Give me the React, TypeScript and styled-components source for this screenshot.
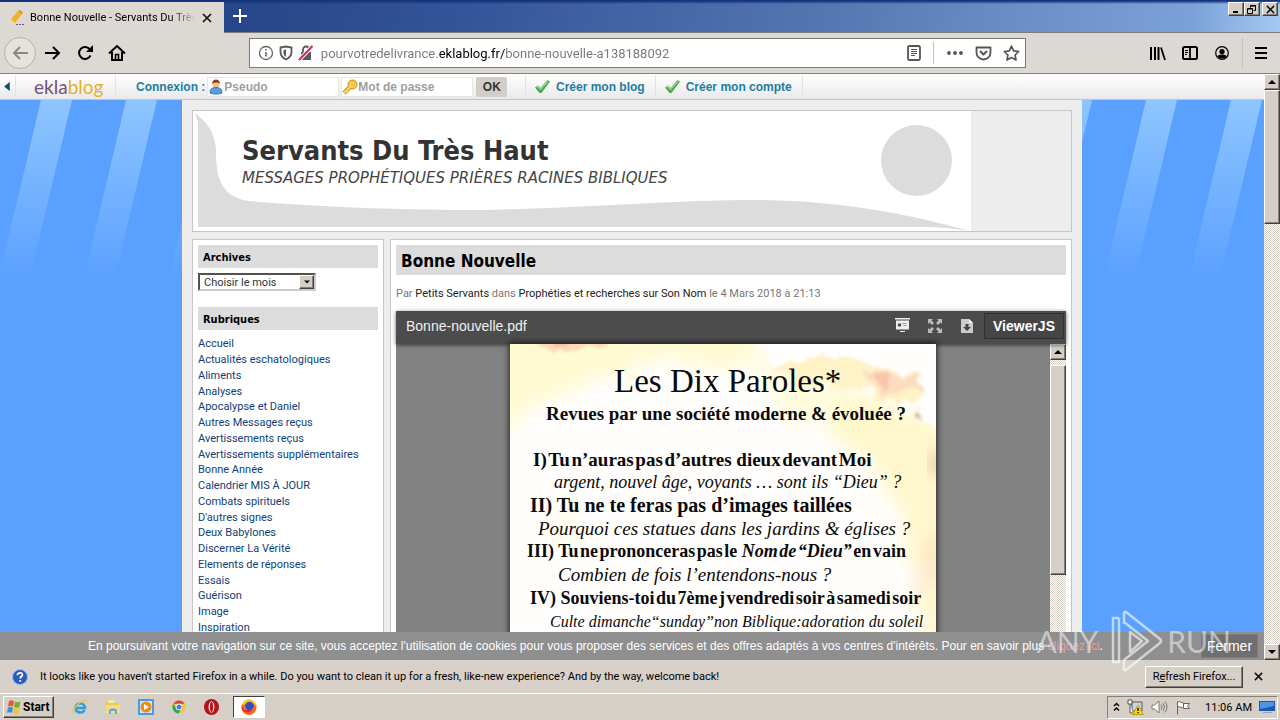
import React from "react";
import styled, { createGlobalStyle, css } from "styled-components";

const uiFont = `Roboto, "Noto Sans", sans-serif`;
const webFont = `"Liberation Sans", Arial, sans-serif`;
const tahoma = `"DejaVu Sans Condensed", "Noto Sans", sans-serif`;
const verdana = `"DejaVu Sans", Verdana, sans-serif`;
const docFont = `"Liberation Serif", "Times New Roman", serif`;

const GlobalStyle = createGlobalStyle`
  *, *::before, *::after { box-sizing: border-box; }
  body { margin: 0; background: #d6cfc8; font-family: ${uiFont}; font-size: 11px; color: #000; }
  button, input, select { font: inherit; margin: 0; padding: 0; border: 0; background: none; color: inherit; }
  a { color: inherit; text-decoration: none; }
  h1, h2, h3, p, ul { margin: 0; padding: 0; }
  ul { list-style: none; }
  svg { display: block; flex: none; }
`;

const raised = css`
  background: #d6cfc8;
  border: 1px solid;
  border-color: #fff #404040 #404040 #fff;
  box-shadow: inset -1px -1px 0 #868078;
`;

const Desktop = styled.div`
  display: flex;
  flex-direction: column;
  height: 100vh;
  min-height: 480px;
  position: relative;
  overflow: hidden;
`;

/* ---------- window title bar ---------- */

const TitleBar = styled.header`
  display: flex;
  align-items: flex-start;
  height: 33px;
  flex: none;
  background:
    linear-gradient(180deg, #15337c 0 1px, rgba(21, 51, 124, 0) 4px),
    linear-gradient(97deg, #1d3c83 0%, #2b4a8c 24%, #34549a 36%, #5173ae 62%, #6b8fc6 80%, #7ba2d8 93%, #a3caf2 100%);
  border-bottom: 1px solid #7d7d80;
`;

const Tab = styled.div`
  display: flex;
  align-items: center;
  width: 224px;
  height: 31px;
  margin-top: 2px;
  padding: 0 9px 0 8px;
  background: #dcd8d3;
`;

const TabTitle = styled.span`
  flex: 1;
  margin-left: 6px;
  overflow: hidden;
  white-space: nowrap;
  mask-image: linear-gradient(90deg, #000 140px, transparent 166px);
`;

const IconButton = styled.button<{ $size?: number; $round?: boolean }>`
  display: flex;
  align-items: center;
  justify-content: center;
  flex: none;
  width: ${(p) => p.$size ?? 32}px;
  height: ${(p) => p.$size ?? 32}px;
  ${(p) =>
    p.$round &&
    css`
      margin-right: 1px;
      border: 1px solid #b5b1ac;
      border-radius: 50%;
      background: #e6e3df;
    `}
`;

const WindowButtons = styled.div`
  display: flex;
  margin: 2px 2px 0 auto;
`;

const WindowButton = styled.button<{ $gap?: boolean }>`
  ${raised}
  display: flex;
  align-items: center;
  justify-content: center;
  width: 16px;
  height: 14px;
  margin-left: ${(p) => (p.$gap ? 2 : 0)}px;
`;

/* ---------- navigation bar ---------- */

const NavBar = styled.nav`
  display: flex;
  align-items: center;
  height: 41px;
  flex: none;
  padding: 0 3px 0 4px;
  background: #dcd8d3;
  border-bottom: 1px solid #83807b;
`;

const FlexSpace = styled.div`
  flex: 117 1 0;
`;

const UrlBox = styled.div`
  display: flex;
  align-items: center;
  flex: 773 1 0;
  height: 30px;
  padding: 0 2px 0 8px;
  gap: 4px;
  background: #fff;
  border: 1px solid #7b7974;
`;

const UrlInput = styled.input`
  flex: 1;
  min-width: 0;
  margin-left: 3px;
  font-size: 13px;
  color: transparent;
  background: linear-gradient(90deg, #777 0 118px, #000 118px 184px, #777 184px);
  background-clip: text;
  -webkit-background-clip: text;
`;

const Rule = styled.span<{ $h?: number; $color?: string; $space?: string }>`
  width: 1px;
  height: ${(p) => p.$h ?? 22}px;
  flex: none;
  margin: ${(p) => p.$space ?? "0"};
  background: ${(p) => p.$color ?? "#c5c2bd"};
`;

/* ---------- page ---------- */

const Viewport = styled.div`
  display: flex;
  flex: 1;
  min-height: 0;
`;

const Page = styled.div`
  position: relative;
  display: flex;
  flex-direction: column;
  flex: 1;
  min-width: 0;
  overflow: hidden;
  background: #59a0ff;
`;

const EklaBar = styled.div`
  display: flex;
  align-items: center;
  height: 26px;
  flex: none;
  background: linear-gradient(#fff, #e9e9e9);
  border-bottom: 1px solid #c4c4c4;
  font: bold 12px ${webFont};
  color: #1f7da3;
`;

const Logo = styled.a`
  width: 99px;
  padding-left: 18px;
  font: 19px/24px Lato, sans-serif;
  color: #75507b;
  b { font-weight: 400; color: #e3b12c; }
`;

const Login = styled.form`
  display: flex;
  align-items: center;
  padding-left: 20px;
  width: 409px;
`;

const Field = styled.label<{ $w: number }>`
  display: flex;
  align-items: center;
  width: ${(p) => p.$w}px;
  height: 20px;
  margin-left: 2px;
  background: #fff;
  border: 1px solid #e6e6e6;
  input { flex: 1; min-width: 0; color: #555; }
  input::placeholder { color: #a0a0a0; opacity: 1; }
`;

const OkButton = styled.button`
  width: 31px;
  height: 20px;
  margin-left: 3px;
  border-radius: 2px;
  background: #d3cdc7;
  color: #333;
`;

const EklaLink = styled.a`
  display: flex;
  align-items: center;
  gap: 6px;
  height: 24px;
  padding: 0 10px 0 9px;
  border-left: 1px solid #e2e2e2;
  &:last-child { border-right: 1px solid #e2e2e2; }
`;

const Backdrop = styled.div`
  position: relative;
  flex: 1;
  min-height: 0;
  overflow: hidden;
`;

const Stripes = styled.svg`
  position: absolute;
  inset: 0;
  width: 100%;
  height: 200px;
`;

const Wrapper = styled.div`
  position: relative;
  max-width: 900px;
  margin: 0 auto;
  padding: 10px 9px 0;
  background: #ededed;
  border: solid #f3eeea;
  border-width: 0 1px;
`;

const Banner = styled.div`
  position: relative;
  height: 122px;
  overflow: hidden;
  border: 1px solid #c6c6c6;
`;

const BannerText = styled.div`
  position: absolute;
  left: 49px;
  top: 21px;
`;

const SiteTitle = styled.h1`
  font: bold 27px/38px ${tahoma};
  color: #333;
`;

const SiteSub = styled.p`
  font: italic 15px/16px ${verdana};
  color: #444;
`;

const Columns = styled.div`
  display: flex;
  align-items: flex-start;
  gap: 6px;
  margin-top: 7px;
`;

const Panel = styled.section`
  min-height: 600px;
  background: #fff;
  border: 1px solid #c8c8c8;
`;

const Sidebar = styled(Panel)`
  flex: none;
  width: 192px;
  padding: 5px 5px 0;
`;

const Main = styled(Panel)`
  flex: 1;
  min-width: 0;
  padding: 5px 5px 0;
`;

const SideTitle = styled.h3<{ $top?: number }>`
  margin-top: ${(p) => p.$top ?? 0}px;
  padding: 3px 0 0 5px;
  background: #dcdcdc;
  font: bold 11px/20px ${tahoma};
`;

const SelectBox = styled.div`
  position: relative;
  width: 118px;
  height: 18px;
  margin-top: 5px;
  select {
    width: 100%;
    height: 100%;
    padding-left: 4px;
    appearance: none;
    border: 2px solid;
    border-color: #55524e #cfcac4 #cfcac4 #55524e;
    background: #fff;
    color: #333;
  }
`;

const SelectArrow = styled.span`
  ${raised}
  position: absolute;
  right: 2px;
  top: 2px;
  width: 15px;
  height: 14px;
  display: flex;
  align-items: center;
  justify-content: center;
  pointer-events: none;
`;

const Categories = styled.ul`
  margin-top: 6px;
  color: #103e78;
  li { line-height: 16px; }
  li:nth-child(4n) { line-height: 15px; }
`;

const PostTitle = styled.h2`
  padding: 2px 0 0 5px;
  background: #dcdcdc;
  font: bold 17px/28px ${tahoma};
`;

const PostMeta = styled.p`
  margin-top: 11px;
  line-height: 16px;
  color: #777;
  a { color: #222; }
`;

/* ---------- document viewer ---------- */

const Viewer = styled.div`
  margin-top: 9px;
  background: #828282;
`;

const ViewerBar = styled.div`
  position: relative;
  display: flex;
  align-items: center;
  height: 33px;
  padding: 0 2px 3px 10px;
  background: #4c4c4c;
  box-shadow: 0 1px 4px rgba(0, 0, 0, 0.6);
  font: 14px ${webFont};
  color: #f0f0f0;
`;

const ViewerTools = styled.div`
  display: flex;
  align-items: center;
  margin-left: auto;
`;

const ViewerBrand = styled.a`
  margin-left: 1px;
  padding: 0 8px;
  border: 1px solid #2f2f2f;
  background: #454545;
  font: bold 14px/24px ${webFont};
  color: #fff;
`;

const ViewerBody = styled.div`
  display: flex;
  height: 500px;
`;

const Canvas = styled.div`
  display: flex;
  justify-content: center;
  flex: 1;
`;

const Sheet = styled.article`
  position: relative;
  width: 426px;
  padding-top: 17px;
  background: #fffefd;
  box-shadow: 0 0 6px 1px rgba(0, 0, 0, 0.75);
  overflow: hidden;
  font-family: ${docFont};
`;

const Parchment = styled.svg`
  position: absolute;
  inset: 0;
`;

const Line = styled.p<{ $indent: number; $size: number; $bold?: boolean; $italic?: boolean; $h?: number; $gap?: number }>`
  position: relative;
  padding-left: ${(p) => p.$indent}px;
  margin-bottom: ${(p) => p.$gap ?? 0}px;
  font-size: ${(p) => p.$size}px;
  line-height: ${(p) => p.$h ?? 23}px;
  font-weight: ${(p) => (p.$bold ? 700 : 400)};
  font-style: ${(p) => (p.$italic ? "italic" : "normal")};
  white-space: nowrap;
  color: #0a0a0a;
`;

/* ---------- classic scroll bar ---------- */

const ScrollTrack = styled.div`
  display: flex;
  flex-direction: column;
  flex: none;
  width: 16px;
  background: repeating-conic-gradient(#fff 0 25%, #d6cfc8 0 50%) 0 0 / 2px 2px;
`;

const ScrollButton = styled.button`
  ${raised}
  display: flex;
  align-items: center;
  justify-content: center;
  width: 16px;
  height: 16px;
  flex: none;
`;

const ScrollThumb = styled.div<{ $top: number; $h: number }>`
  ${raised}
  margin-top: ${(p) => p.$top}px;
  margin-bottom: auto;
  height: ${(p) => p.$h}px;
`;

/* ---------- bottom bars ---------- */

const CookieBar = styled.div`
  position: absolute;
  left: 0;
  right: 0;
  bottom: 0;
  display: flex;
  align-items: center;
  height: 28px;
  padding: 0 6px 0 88px;
  background: #8f8f8f;
  font: 12px ${webFont};
  color: #fff;
  white-space: nowrap;
  a { color: #e0a0a0; }
`;

const CloseCookies = styled.button`
  margin-left: auto;
  width: 57px;
  height: 24px;
  border: 1px solid #7c7c7c;
  background: #6f6f6f;
  font-size: 14px;
`;

const Notice = styled.div`
  display: flex;
  align-items: center;
  height: 33px;
  flex: none;
  padding: 0 10px 0 12px;
  background: #d8d1ca;
  p { margin-left: 12px; }
`;

const RefreshButton = styled.button`
  ${raised}
  margin-left: auto;
  margin-right: 3px;
  width: 98px;
  height: 22px;
`;

const TaskBar = styled.footer`
  display: flex;
  align-items: center;
  height: 27px;
  flex: none;
  padding: 0 2px 0 3px;
  background: #d6cfc8;
  border-top: 1px solid #fff;
`;

const StartButton = styled.button`
  ${raised}
  display: flex;
  align-items: center;
  gap: 1px;
  width: 51px;
  height: 22px;
  margin-right: 9px;
  padding-left: 2px;
  font-weight: 700;
  font-size: 12px;
`;

const TaskButton = styled.button<{ $active?: boolean }>`
  display: flex;
  align-items: center;
  justify-content: center;
  width: ${(p) => (p.$active ? 32 : 33)}px;
  height: 22px;
  ${(p) =>
    p.$active &&
    css`
      margin-left: 5px;
      background: #fff;
      border: 1px solid;
      border-color: #404040 #fff #fff #404040;
    `}
`;

const Tray = styled.div`
  display: flex;
  align-items: center;
  gap: 7px;
  height: 23px;
  margin-left: auto;
  padding: 0 2px 0 5px;
  border: 1px solid;
  border-color: #868078 #fff #fff #868078;
  time { margin: 0 0 0 6px; }
`;

const Watermark = styled.div`
  position: absolute;
  right: 49px;
  bottom: 48px;
  display: flex;
  align-items: center;
  gap: 3px;
  font: 30px/62px Lato, sans-serif;
  color: rgba(255, 255, 255, 0.5);
  pointer-events: none;
  svg { margin-left: 9px; }
`;

/* ---------- icons ---------- */

const CloseX = ({ s = 10 }: { s?: number }) => (
  <svg width={s} height={s} viewBox="0 0 10 10" stroke="#111" strokeWidth="1.7" fill="none">
    <path d="M1 1l8 8M9 1l-8 8" />
  </svg>
);

const Arrow = ({ dir, s = 8 }: { dir: "up" | "down" | "left"; s?: number }) => (
  <svg width={s} height={s} viewBox="0 0 8 8" fill={dir === "left" ? "#0b4f63" : "#000"}>
    <path d={dir === "up" ? "M0 6h8L4 2z" : dir === "down" ? "M0 2h8L4 6z" : "M6 0v8L1 4z"} />
  </svg>
);

const Check = () => (
  <svg width="15" height="13" viewBox="0 0 15 13">
    <path d="M0 7.500L3 5.500 5.500 8 12.500 0 15 1.500 6.500 13H4.500z" fill="#4fa653" />
    <path d="M1.500 7.300L3 6.500 5.500 9.300 12.600 1.500" fill="none" stroke="#9fd79b" strokeWidth="1.200" />
  </svg>
);

const Scroll = ({ top, height }: { top: number; height: number }) => (
  <ScrollTrack>
    <ScrollButton aria-label="Défiler vers le haut"><Arrow dir="up" /></ScrollButton>
    <ScrollThumb $top={top} $h={height} />
    <ScrollButton aria-label="Défiler vers le bas"><Arrow dir="down" /></ScrollButton>
  </ScrollTrack>
);

const categories = [
  "Accueil", "Actualités eschatologiques", "Aliments", "Analyses", "Apocalypse et Daniel",
  "Autres Messages reçus", "Avertissements reçus", "Avertissements supplémentaires",
  "Bonne Année", "Calendrier MIS À JOUR", "Combats spirituels", "D'autres signes",
  "Deux Babylones", "Discerner La Vérité", "Elements de réponses", "Essais", "Guérison",
  "Image", "Inspiration",
];

const ParchmentArt = () => (
  <Parchment width="426" height="500" viewBox="0 0 426 500" aria-hidden="true">
    <defs>
      <filter id="rough" x="-20%" y="-20%" width="140%" height="140%">
        <feTurbulence type="fractalNoise" baseFrequency="0.06" numOctaves="4" seed="4" result="n" />
        <feDisplacementMap in="SourceGraphic" in2="n" scale="20" xChannelSelector="R" yChannelSelector="G" />
        <feGaussianBlur stdDeviation="1.5" />
      </filter>
      <filter id="soft" x="-30%" y="-30%" width="160%" height="160%">
        <feTurbulence type="fractalNoise" baseFrequency="0.04" numOctaves="3" seed="9" result="n" />
        <feDisplacementMap in="SourceGraphic" in2="n" scale="34" xChannelSelector="R" yChannelSelector="G" />
        <feGaussianBlur stdDeviation="9" />
      </filter>
    </defs>
    <g filter="url(#soft)">
      <path d="M-20 -20H250L240 22L150 18L80 34L36 60L-20 90z" fill="#fffad2" />
      <path d="M300 30L400 70L450 90V520H420L412 330L406 240L384 150L330 100L280 56z" fill="#fff8cc" />
      <path d="M230 14h80l20 56-50 10z" fill="#fffbdc" />
      <ellipse cx="50" cy="180" rx="18" ry="22" fill="#fffdee" />
      <ellipse cx="426" cy="215" rx="9" ry="24" fill="#fbd9c0" />
      <ellipse cx="412" cy="240" rx="10" ry="14" fill="#fde9d4" />
    </g>
    <g filter="url(#rough)">
      <path d="M252 -12H440V96L412 72L402 64L418 50L416 30L370 20L330 12L284 16L266 26z" fill="#fffefd" />
      <path d="M262 26L290 14L330 10L362 20L408 30L414 48L400 62L380 58L350 44L310 40z" fill="#fef2c6" />
      <path d="M354 26L384 28L404 32L412 42L392 46L376 52L362 42z" fill="#fbdcc0" />
      <path d="M364 30L380 30L376 44L366 40z" fill="#f7c5ad" />
      <path d="M18 -8H104L96 2L66 5L40 8L26 2z" fill="#fbdab8" />
      <path d="M36 -6H66L56 4L44 3z" fill="#f5bfa2" />
      <path d="M403 66l6 0 5 4 1 4-7-4z" fill="#d9b0a4" />
    </g>
    <g filter="url(#soft)">
      <ellipse cx="430" cy="118" rx="8" ry="16" fill="#dc9a92" />
    </g>
  </Parchment>
);

export default function App() {
  return (
    <Desktop>
      <GlobalStyle />
      <TitleBar>
        <Tab>
          <svg width="16" height="16" viewBox="0 0 16 16">
            <path d="M1 15l2-6 4 4z" fill="#f5d9a0" />
            <path d="M3 9L10 1l4 3-7 9z" fill="#f0b323" />
            <path d="M10 1l2-1 3 3-1 1z" fill="#e08a1c" />
            <path d="M8 14h2v1H8zM11 14h2v1h-2zM14 14h2v1h-2z" fill="#75507b" />
          </svg>
          <TabTitle>Bonne Nouvelle - Servants Du Très Haut</TabTitle>
          <IconButton $size={16} aria-label="Fermer l'onglet"><CloseX /></IconButton>
        </Tab>
        <IconButton aria-label="Nouvel onglet">
          <svg width="14" height="14" viewBox="0 0 14 14" stroke="#fff" strokeWidth="2"><path d="M7 0v14M0 7h14" /></svg>
        </IconButton>
        <WindowButtons>
          <WindowButton aria-label="Réduire">
            <svg width="8" height="8"><path d="M1 6h5v2H1z" /></svg>
          </WindowButton>
          <WindowButton aria-label="Restaurer">
            <svg width="10" height="9" viewBox="0 0 10 9" fill="none" stroke="#000"><path d="M3.500 2.500v-2h5v5h-2M3 1h6M.5 3.500h5v5h-5zM1 4h5" /></svg>
          </WindowButton>
          <WindowButton $gap aria-label="Fermer"><CloseX s={9} /></WindowButton>
        </WindowButtons>
      </TitleBar>

      <NavBar>
        <IconButton $round aria-label="Précédent">
          <svg width="16" height="14" viewBox="0 0 16 14" fill="none" stroke="#8c8984" strokeWidth="2"><path d="M16 7H2M8 1L2 7l6 6" /></svg>
        </IconButton>
        <IconButton aria-label="Suivant">
          <svg width="16" height="14" viewBox="0 0 16 14" fill="none" stroke="#000" strokeWidth="2"><path d="M0 7h14M8 1l6 6-6 6" /></svg>
        </IconButton>
        <IconButton aria-label="Actualiser">
          <svg width="16" height="16" viewBox="0 0 16 16" fill="none" stroke="#000" strokeWidth="2">
            <path d="M13 4.500A6 6 0 1 0 13.500 10.500" /><path d="M9 7h7V0z" fill="#000" stroke="none" />
          </svg>
        </IconButton>
        <IconButton aria-label="Accueil">
          <svg width="18" height="16" viewBox="0 0 18 16" fill="none" stroke="#000" strokeWidth="2">
            <path d="M1 8.500L9 1l8 7.500M4 7v8h10V7" /><path d="M7.500 15V9.500h3V15" strokeWidth="1.600" />
          </svg>
        </IconButton>
        <FlexSpace />
        <UrlBox>
          <svg width="16" height="16" viewBox="0 0 16 16" fill="none" stroke="#666"><circle cx="8" cy="8" r="6.500" strokeWidth="1.300" /><path d="M8 7v4.500M8 4v1.600" strokeWidth="1.600" /></svg>
          <svg width="16" height="16" viewBox="0 0 16 16"><path d="M2.500 2.500L8 1.500l5.500 1V7c0 4-2.500 6-5.500 7.500C5 13 2.500 11 2.500 7z" fill="none" stroke="#5a5a5a" strokeWidth="1.800" /><path d="M8 4.500L5.500 5v3c0 1.800 1 3 2.500 4z" fill="#5a5a5a" /></svg>
          <svg width="16" height="16" viewBox="0 0 16 16"><path d="M3 7h10v8H3z" fill="#5a5a5a" /><path d="M5 7V4.500a3 3 0 0 1 6 0V7" fill="none" stroke="#5a5a5a" strokeWidth="1.800" /><path d="M1 15L14.500 1" stroke="#fff" strokeWidth="4" /><path d="M1 15L14.500 1" stroke="#d7264f" strokeWidth="2" /></svg>
          <UrlInput aria-label="Adresse" defaultValue="pourvotredelivrance.eklablog.fr/bonne-nouvelle-a138188092" />
          <IconButton $size={22} aria-label="Mode lecture">
            <svg width="14" height="16" viewBox="0 0 14 16" fill="none" stroke="#555"><rect x="1" y="1" width="12" height="14" rx="1.500" strokeWidth="1.800" /><path d="M4 4.500h6M4 6.500h6M4 8.500h6M4 10.500h4" /></svg>
          </IconButton>
          <Rule $space="0 5px 0 4px" />
          <IconButton $size={24} aria-label="Actions">
            <svg width="16" height="4" viewBox="0 0 16 4" fill="#555"><circle cx="2" cy="2" r="1.900" /><circle cx="8" cy="2" r="1.900" /><circle cx="14" cy="2" r="1.900" /></svg>
          </IconButton>
          <IconButton $size={24} aria-label="Pocket">
            <svg width="17" height="15" viewBox="0 0 17 15" fill="none" stroke="#555" strokeWidth="1.800" strokeLinecap="round" strokeLinejoin="round"><path d="M1.500 1.500h14v5a7 7 0 0 1-14 0z" /><path d="M5.500 5.500l3 3 3-3" strokeWidth="2" /></svg>
          </IconButton>
          <IconButton $size={24} aria-label="Marquer cette page">
            <svg width="17" height="16" viewBox="0 0 17 16" fill="none" stroke="#555" strokeWidth="1.700" strokeLinejoin="round"><path d="M8.500 1.200l2.200 4.600 5 .7-3.600 3.500.9 5-4.500-2.400L4 15l.9-5L1.300 6.500l5-.7z" /></svg>
          </IconButton>
        </UrlBox>
        <FlexSpace />
        <IconButton aria-label="Bibliothèque">
          <svg width="16" height="15" viewBox="0 0 16 15" stroke="#000" strokeWidth="2" fill="none"><path d="M1 1v13M5 1v13M8.500 1v13" /><path d="M11 1.500l4 12.500" strokeWidth="1.800" /></svg>
        </IconButton>
        <IconButton aria-label="Barres latérales">
          <svg width="16" height="14" viewBox="0 0 16 14" fill="none" stroke="#000"><rect x="1" y="1" width="14" height="12" rx="1.500" strokeWidth="2" /><path d="M8 1v12" strokeWidth="1.800" /><path d="M3 4.500h3M3 6.500h3M3 8.500h2" /></svg>
        </IconButton>
        <IconButton aria-label="Compte">
          <svg width="14" height="14" viewBox="0 0 14 14"><circle cx="7" cy="7" r="6.300" fill="none" stroke="#000" strokeWidth="1.200" /><circle cx="7" cy="5.500" r="2.600" /><path d="M2.500 10c1-1.500 3-1.500 4.500-1.500s3.500 0 4.500 1.500C10.500 12 9 12.500 7 12.500S3.500 12 2.500 10z" /></svg>
        </IconButton>
        <Rule $h={30} $space="0 2px 0 4px" />
        <IconButton aria-label="Menu">
          <svg width="12" height="12" viewBox="0 0 12 12" stroke="#000" strokeWidth="2"><path d="M0 1h12M0 6h12M0 11h12" /></svg>
        </IconButton>
      </NavBar>

      <Viewport>
        <Page>
          <EklaBar>
            <IconButton $size={15} aria-label="Réduire la barre"><Arrow dir="left" s={9} /></IconButton>
            <Rule $h={24} $color="#e2e2e2" />
            <Logo href="#">ekla<b>blog</b></Logo>
            <Rule $h={24} $color="#e2e2e2" />
            <Login>
              Connexion :
              <Field $w={132} aria-label="Pseudo">
                <svg width="16" height="16" viewBox="0 0 16 16"><circle cx="8" cy="5" r="3.500" fill="#f0bd8c" /><path d="M4 5c0-6 8-6 8 0-1-2-6-2-8 0z" fill="#8a3d12" /><path d="M2 14c0-5 3-5.500 6-5.500s6 .5 6 5.500c-3 1.500-9 1.500-12 0z" fill="#5b9be0" stroke="#2f62a8" strokeWidth=".8" /></svg>
                <input placeholder="Pseudo" />
              </Field>
              <Field $w={132} aria-label="Mot de passe">
                <svg width="16" height="16" viewBox="0 0 16 16" fill="none"><path d="M8 8l-6 6" stroke="#c18d14" strokeWidth="4.500" /><circle cx="10.500" cy="5.500" r="4.500" fill="#f7cf57" stroke="#c18d14" /><path d="M8 8l-6 6M4 12l2 2" stroke="#f7cf57" strokeWidth="2.500" /><circle cx="11.500" cy="4.500" r="1.400" fill="#fff" stroke="#c18d14" strokeWidth=".7" /></svg>
                <input placeholder="Mot de passe" />
              </Field>
              <OkButton type="button">OK</OkButton>
            </Login>
            <EklaLink href="#"><Check />Créer mon blog</EklaLink>
            <EklaLink href="#"><Check />Créer mon compte</EklaLink>
          </EklaBar>

          <Backdrop>
            <Stripes aria-hidden="true">
              <defs>
                <linearGradient id="fade" x1="0" y1="0" x2="0" y2="1">
                  <stop offset="0" stopColor="#8fc5ff" /><stop offset="1" stopColor="#8fc5ff" stopOpacity="0" />
                </linearGradient>
                <pattern id="stripe" width="85" height="400" patternUnits="userSpaceOnUse" patternTransform="translate(41 0) skewX(-13.3)">
                  <rect width="31" height="180" fill="url(#fade)" />
                </pattern>
              </defs>
              <rect width="100%" height="200" fill="url(#stripe)" />
            </Stripes>
            <Wrapper>
              <Banner>
                <svg width="778" height="120" viewBox="193 111 778 120">
                  <path d="M193 111h778v120H193z" fill="#fff" />
                  <path d="M195 113C206 121 215 132 216 150C216 175 219 196 248 201C330 208 410 210 480 210C590 208 670 200 757 200C840 201 905 213 969 231C945 227 935 227 900 227H198V122z" fill="#dcdcdc" />
                  <circle cx="916.500" cy="160.500" r="35.500" fill="#dcdcdc" />
                </svg>
                <BannerText>
                  <SiteTitle>Servants Du Très Haut</SiteTitle>
                  <SiteSub>MESSAGES PROPHÉTIQUES PRIÈRES RACINES BIBLIQUES</SiteSub>
                </BannerText>
              </Banner>
              <Columns>
                <Sidebar>
                  <SideTitle>Archives</SideTitle>
                  <SelectBox>
                    <select aria-label="Archives"><option>Choisir le mois</option></select>
                    <SelectArrow><Arrow dir="down" s={6} /></SelectArrow>
                  </SelectBox>
                  <SideTitle $top={16}>Rubriques</SideTitle>
                  <Categories>
                    {categories.map((c) => <li key={c}><a href="#">{c}</a></li>)}
                  </Categories>
                </Sidebar>
                <Main>
                  <PostTitle>Bonne Nouvelle</PostTitle>
                  <PostMeta>
                    Par <a href="#">Petits Servants</a> dans <a href="#">Prophéties et recherches sur Son Nom</a> le 4 Mars 2018 à 21:13
                  </PostMeta>
                  <Viewer>
                    <ViewerBar>
                      Bonne-nouvelle.pdf
                      <ViewerTools>
                        <IconButton aria-label="Présentation">
                          <svg width="15" height="16" viewBox="0 0 15 16" fill="#eee"><path d="M0 0h15v1.500H0zM1 2.500h13v9H1zM5 13h5v1H5z" /><circle cx="4.500" cy="7" r="1.800" fill="#4c4c4c" /><path d="M7.500 5h4v1h-4zM8.500 7h3v1h-3z" fill="#999" /></svg>
                        </IconButton>
                        <IconButton aria-label="Plein écran">
                          <svg width="14" height="14" viewBox="0 0 14 14" fill="#bbb"><path d="M0 0h5L3.500 1.500 6 4 4 6 1.500 3.500 0 5zM14 0v5l-1.500-1.500L10 6 8 4l2.500-2.500L9 0zM0 14V9l1.500 1.500L4 8l2 2-2.500 2.500L5 14zM14 14H9l1.500-1.500L8 10l2-2 2.500 2.500L14 9z" /></svg>
                        </IconButton>
                        <IconButton aria-label="Télécharger">
                          <svg width="12" height="14" viewBox="0 0 12 14"><path d="M0 0h8l4 4v10H0z" fill="#ccc" /><path d="M8 0v4h4z" fill="#fff" /><path d="M4.500 5h3v3H10l-4 4-4-4h2.500z" fill="#444" /></svg>
                        </IconButton>
                        <ViewerBrand href="#">ViewerJS</ViewerBrand>
                      </ViewerTools>
                    </ViewerBar>
                    <ViewerBody>
                      <Canvas>
                        <Sheet>
                          <ParchmentArt />
                          <Line $indent={104} $size={33} $h={41}>Les Dix Paroles*</Line>
                          <Line $indent={36} $size={19} $bold $gap={23}>Revues par une société moderne &amp; évoluée ?</Line>
                          <Line $indent={23} $size={19} $bold>I){"\u200A"}Tu{"\u200A"}n’auras{"\u200A"}pas{"\u200A"}d’autres dieux{"\u200A"}devant{"\u200A"}Moi</Line>
                          <Line $indent={44} $size={18} $italic>argent, nouvel âge, voyants … sont ils “Dieu” ?</Line>
                          <Line $indent={20} $size={20} $bold>II) Tu ne te feras pas d’images taillées</Line>
                          <Line $indent={28} $size={19} $italic>Pourquoi ces statues dans les jardins &amp; églises ?</Line>
                          <Line $indent={17} $size={18} $bold>III) Tu{"\u200A"}ne{"\u200A"}prononceras{"\u200A"}pas{"\u200A"}le <i>Nom{"\u200A"}de{"\u200A"}“Dieu”</i>{"\u200A"}en{"\u200A"}vain</Line>
                          <Line $indent={48} $size={19} $italic>Combien de fois l’entendons-nous ?</Line>
                          <Line $indent={20} $size={18} $bold $h={24}>IV) Souviens-toi{"\u200A"}du{"\u200A"}7ème{"\u200A"}j{"\u200A"}vendredi{"\u200A"}soir{"\u200A"}à{"\u200A"}samedi{"\u200A"}soir</Line>
                          <Line $indent={40} $size={16} $italic>Culte dimanche“sunday”non Biblique:adoration du soleil</Line>
                        </Sheet>
                      </Canvas>
                      <Scroll top={5} height={210} />
                    </ViewerBody>
                  </Viewer>
                </Main>
              </Columns>
            </Wrapper>
          </Backdrop>

          <CookieBar>
            <span>
              En poursuivant votre navigation sur ce site, vous acceptez l'utilisation de cookies pour vous proposer des services et des offres adaptés à vos centres d'intérêts. Pour en savoir plus <a href="#">cliquez ici</a>.
            </span>
            <CloseCookies>Fermer</CloseCookies>
          </CookieBar>
        </Page>
        <Scroll top={0} height={134} />
      </Viewport>

      <Notice>
        <svg width="16" height="16" viewBox="0 0 16 16"><circle cx="8" cy="8" r="7.500" fill="#2a5cc0" stroke="#9db8e6" /><path d="M5.500 6.200C5.500 3 10.600 3.200 10.400 6c-.1 1.500-2.200 1.700-2.200 3.600M8.200 11v1.800" fill="none" stroke="#fff" strokeWidth="1.800" /></svg>
        <p>It looks like you haven't started Firefox in a while. Do you want to clean it up for a fresh, like-new experience? And by the way, welcome back!</p>
        <RefreshButton>R<u>e</u>fresh Firefox...</RefreshButton>
        <IconButton $size={24} aria-label="Fermer"><CloseX s={9} /></IconButton>
      </Notice>

      <TaskBar>
        <StartButton>
          <svg width="16" height="16" viewBox="0 0 16 16"><path d="M3 2c2-1 3-1 5 0L7 7.500c-2-1-3-1-5 0z" fill="#e8592b" /><path d="M9 2.500c2 1 3 1 5.500 0L13.500 8c-2 1-3.500 1-5.500 0z" fill="#6fb52c" /><path d="M2 8.500c2-1 3-1 5 0L6 14c-2-1-3-1-5 0z" fill="#3c8fe0" /><path d="M8 9c2 1 3 1 5.500 0l-1 5.500c-2 1-3.500 1-5.500 0z" fill="#f7c42c" /></svg>
          Start
        </StartButton>
        <TaskButton aria-label="Internet Explorer">
          <svg width="16" height="16" viewBox="0 0 16 16" fill="none"><path d="M3.500 9H13c0-6-9.500-6-9.500 0 0 5 7 6 9 2" stroke="#2f9fe0" strokeWidth="2.600" /><path d="M2 14.500C-1 11 9 0 15 2" stroke="#f3c231" strokeWidth="1.300" /></svg>
        </TaskButton>
        <TaskButton aria-label="Explorateur">
          <svg width="16" height="16" viewBox="0 0 16 16"><path d="M1 3l5-1 2 2h6v9H1z" fill="#e9c75c" /><path d="M3 1h6l1 3H3z" fill="#f9e9a8" /><path d="M1 6h14v8H1z" fill="#f6dc83" /><path d="M4 15v-4c0-2 8-2 8 0v4h-2v-3H6v3z" fill="#69a9dc" /></svg>
        </TaskButton>
        <TaskButton aria-label="Lecteur multimédia">
          <svg width="16" height="16" viewBox="0 0 16 16"><path d="M0 0h16v16H0z" fill="#4f9bd8" /><path d="M2 2h12v12H2z" fill="#cde6f8" /><circle cx="8" cy="8" r="5.500" fill="#f08a1d" /><path d="M6 5v6l5-3z" fill="#fff" /></svg>
        </TaskButton>
        <TaskButton aria-label="Chrome">
          <svg width="14" height="14" viewBox="0 0 14 14"><circle cx="7" cy="7" r="6.500" fill="#f4c534" /><path d="M1.300 3.800A6.500 6.500 0 0 1 12.700 3.800H7z" fill="#de4436" /><path d="M1.300 3.800A6.500 6.500 0 0 0 6.500 13.500L9.500 8.500 4 8.500z" fill="#34a455" /><circle cx="7" cy="7" r="3.200" fill="#fff" /><circle cx="7" cy="7" r="2.500" fill="#3f7fe8" /></svg>
        </TaskButton>
        <TaskButton aria-label="Opera">
          <svg width="15" height="16" viewBox="0 0 15 16"><ellipse cx="7.500" cy="8" rx="7.500" ry="8" fill="#b5121b" /><ellipse cx="7.500" cy="8" rx="3" ry="5.800" fill="#e9dcd8" /><ellipse cx="7.500" cy="8" rx="1.500" ry="5" fill="#b5121b" /></svg>
        </TaskButton>
        <TaskButton $active aria-label="Firefox">
          <svg width="16" height="16" viewBox="0 0 16 16"><circle cx="8" cy="8.500" r="7.500" fill="#ff6a1f" /><path d="M1 6C3 0 6 1 8 0c5 1 8 4 7.500 9C14 4 10 3 6 5z" fill="#ffc22c" /><circle cx="8.500" cy="7" r="4.200" fill="#2b4fc0" /><path d="M1 6c0 3 2 5 5 5s4-1 5-2c1 4-4 5-7 4S0 9 1 6z" fill="#e8243c" /></svg>
        </TaskButton>
        <Tray>
          <svg width="7" height="10" viewBox="0 0 7 10" fill="none" stroke="#000" strokeWidth="1.400"><path d="M1 4l2.500-2.500L6 4M1 8.500L3.500 6 6 8.500" /></svg>
          <svg width="17" height="16" viewBox="0 0 17 16"><path d="M5 3h10v9H5z" fill="#c8d4e4" stroke="#555" /><path d="M1 1h4v4H1zM3 5v9h3" fill="#fff" stroke="#555" /><path d="M11 6l5.500 9.500h-11z" fill="#ffd500" stroke="#a88a00" strokeWidth=".7" /><path d="M11 9v3M11 13v1.200" stroke="#000" strokeWidth="1.300" /></svg>
          <svg width="17" height="14" viewBox="0 0 17 14" fill="none" stroke="#777"><path d="M1 5h2.500L8 1v12L3.500 9H1z" fill="#fff" /><path d="M10 4.500q2 2.500 0 5M12 3q3 4 0 8M14 1.500q4 5.500 0 11" /></svg>
          <svg width="17" height="15" viewBox="0 0 17 15" fill="#fff" stroke="#666"><path d="M2.500 1.500v13M2.500 2c3-1 4 1 6 1v5c-2 0-3-2-6-1zM8.500 3.500h6l-2 2.500 2 2.500h-6" /></svg>
          <time>11:06 AM</time>
          <svg width="16" height="14" viewBox="0 0 16 14"><path d="M0 1h16v10H0z" fill="#1f56b0" /><path d="M1 2h14v4L1 9z" fill="#4f93e6" /><path d="M4 12h9v1H4z" fill="#8fa4bd" /></svg>
        </Tray>
      </TaskBar>

      <Watermark aria-hidden="true">
        <span>ANY</span>
        <svg width="54" height="62" viewBox="0 0 54 62" fill="none" stroke="rgba(255,255,255,.6)" strokeWidth="2.500">
          <path d="M14 14V3Q14 1 16 2L50 29Q52 31 50 33L16 60Q14 61 14 59V50L38 31L14 12M9 8H3V52H9V8M20 22V42L32 31z" strokeLinejoin="round" />
        </svg>
        <span>RUN</span>
      </Watermark>
    </Desktop>
  );
}
